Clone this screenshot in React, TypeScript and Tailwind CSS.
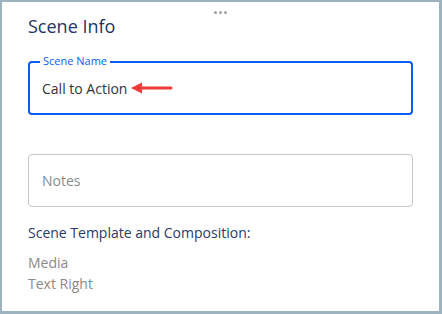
export default function App() {
  return (
    <div className="w-[442px] h-[314px] bg-[#9bb4c0] p-[2px] pb-[3px] pr-[3px] font-['Open_Sans',sans-serif]">
      <div className="relative h-full bg-white px-[26px]">
        {/* drag handle */}
        <div className="absolute left-[212px] top-[9px] flex gap-[2px]">
          <span className="w-[3px] h-[3px] rounded-full bg-[#a0a0a0]" />
          <span className="w-[3px] h-[3px] rounded-full bg-[#a0a0a0]" />
          <span className="w-[3px] h-[3px] rounded-full bg-[#a0a0a0]" />
        </div>

        <h2 className="pt-[12px] text-[18px] leading-[24px] text-[#22345f]">Scene Info</h2>

        {/* Scene name field */}
        <div className="relative mt-[23px] h-[54px] rounded-[4px] border-2 border-[#0a5cf5] flex items-center px-[12px]">
          <span className="absolute -top-[9px] left-[10px] bg-white px-[3px] text-[11px] leading-[14px] text-[#0a5cf5]">
            Scene Name
          </span>
          <span className="text-[14px] text-[#333]">Call to Action</span>
          <svg width="42" height="12" viewBox="0 0 42 12" className="ml-[4px]">
            <line x1="6" y1="6" x2="40" y2="6" stroke="#ef3b3b" strokeWidth="3" strokeLinecap="round" />
            <path d="M0 6 L11 0.5 L11 11.5 Z" fill="#ef3b3b" />
          </svg>
        </div>

        {/* Notes field */}
        <div className="mt-[39px] h-[53px] rounded-[4px] border border-[#c6c6c6] flex items-center px-[13px]">
          <span className="text-[14px] text-[#8a8a8a]">Notes</span>
        </div>

        <p className="mt-[16px] text-[14px] leading-[20px] text-[#27396b]">Scene Template and Composition:</p>
        <div className="mt-[9px] text-[14px] leading-[21px] text-[#8a8a8a]">
          <p>Media</p>
          <p>Text Right</p>
        </div>
      </div>
    </div>
  );
}
